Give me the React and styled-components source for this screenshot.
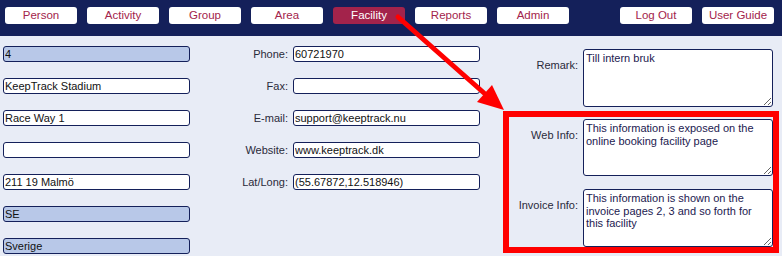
import React from "react";
import styled, { createGlobalStyle } from "styled-components";

const navy = "#14205a";
const crimson = "#a3234b";

const GlobalStyle = createGlobalStyle`
  body {
    margin: 0;
    background: #e8ecf6;
    font-family: "Liberation Sans", Arial, sans-serif;
    font-size: 11px;
    color: #2a2a3a;
  }
`;

const Page = styled.div`
  position: relative;
  width: 782px;
  height: 256px;
  overflow: hidden;
`;

const Nav = styled.nav`
  display: flex;
  align-items: flex-start;
  gap: 10px;
  height: 36px;
  box-sizing: border-box;
  padding: 7px 8px 0 5px;
  background: ${navy};
`;

const NavButton = styled.button`
  width: 72px;
  height: 17px;
  padding: 0;
  border: none;
  border-radius: 3px;
  font-family: inherit;
  font-size: 11.5px;
  line-height: 17px;
  cursor: pointer;
  background: ${props => (props.active ? crimson : "#fff")};
  color: ${props => (props.active ? "#fff" : crimson)};
  margin-left: ${props => (props.push ? "41px" : "0")};
`;

const Main = styled.div`
  display: flex;
  align-items: flex-start;
  padding: 10px 0 0 3px;
`;

const Column = styled.div`
  display: flex;
  flex-direction: column;
  gap: 16px;
`;

const Field = styled.input`
  box-sizing: border-box;
  width: 187px;
  height: 16px;
  padding: 0 1px;
  margin: 0;
  border: 1px solid ${navy};
  border-radius: 3px;
  font-family: inherit;
  font-size: 11px;
  color: #111;
  background: ${props => (props.locked ? "#b8c8e8" : "#fff")};
  outline: none;
`;

const Row = styled.label`
  display: flex;
  align-items: center;
  gap: 5px;
`;

const MidColumn = styled(Column)`
  margin-left: 5px;
`;

const Label = styled.span`
  width: ${props => props.width || 93}px;
  text-align: right;
  color: #2a2a3a;
  flex-shrink: 0;
`;

const RightColumn = styled.div`
  display: flex;
  flex-direction: column;
  gap: 4px;
  width: 276px;
  margin: 3px 0 0 23px;
`;

const AreaRow = styled.label`
  display: flex;
  align-items: flex-start;
  gap: 5px;
  padding: ${props => (props.outside ? "0 6px" : "0")};
`;

const AreaLabel = styled.span`
  flex: 1;
  text-align: right;
  padding-top: 10px;
  line-height: 13px;
`;

const Area = styled.textarea`
  box-sizing: border-box;
  width: 190px;
  height: ${props => props.h || 58}px;
  margin: 0;
  padding: 2px 2px;
  border: 1px solid ${navy};
  border-radius: 3px;
  font-family: inherit;
  font-size: 11px;
  line-height: 12.5px;
  color: #1c2050;
  background: #fff;
  resize: both;
  outline: none;
`;

const Highlight = styled.div`
  display: flex;
  flex-direction: column;
  gap: 13px;
  padding-top: 2px;
  border: 6px solid #ff0000;
  border-top-width: 6px;
`;

const Arrow = styled.svg`
  position: absolute;
  left: 0;
  top: 0;
  pointer-events: none;
`;

const leftFields = [
  { value: "4", locked: true },
  { value: "KeepTrack Stadium" },
  { value: "Race Way 1" },
  { value: "" },
  { value: "211 19 Malmö" },
  { value: "SE", locked: true },
  { value: "Sverige", locked: true },
];

const midFields = [
  { label: "Phone:", value: "60721970" },
  { label: "Fax:", value: "" },
  { label: "E-mail:", value: "support@keeptrack.nu" },
  { label: "Website:", value: "www.keeptrack.dk" },
  { label: "Lat/Long:", value: "(55.67872,12.518946)" },
];

const menu = ["Person", "Activity", "Group", "Area", "Facility", "Reports", "Admin"];

export default function App() {
  return (
    <Page>
      <GlobalStyle />
      <Nav>
        {menu.map(item => (
          <NavButton key={item} active={item === "Facility"}>
            {item}
          </NavButton>
        ))}
        <NavButton push>Log Out</NavButton>
        <NavButton>User Guide</NavButton>
      </Nav>
      <Main>
        <Column>
          {leftFields.map((f, i) => (
            <Field key={i} value={f.value} locked={f.locked} readOnly />
          ))}
        </Column>
        <MidColumn>
          {midFields.map(f => (
            <Row key={f.label}>
              <Label>{f.label}</Label>
              <Field value={f.value} readOnly />
            </Row>
          ))}
        </MidColumn>
        <RightColumn>
          <AreaRow outside>
            <AreaLabel>Remark:</AreaLabel>
            <Area value="Till intern bruk" readOnly />
          </AreaRow>
          <Highlight>
            <AreaRow>
              <AreaLabel>Web Info:</AreaLabel>
              <Area
                h={57}
                value="This information is exposed on the online booking facility page"
                readOnly
              />
            </AreaRow>
            <AreaRow>
              <AreaLabel>Invoice Info:</AreaLabel>
              <Area
                value="This information is shown on the invoice pages 2, 3 and so forth for this facility"
                readOnly
              />
            </AreaRow>
          </Highlight>
        </RightColumn>
      </Main>
      <Arrow width="782" height="256" viewBox="0 0 782 256">
        <line x1="398" y1="17" x2="484" y2="93" stroke="#ff0000" strokeWidth="5" strokeLinecap="round" />
        <polygon points="504,110 477,102 492,85" fill="#ff0000" />
      </Arrow>
    </Page>
  );
}
